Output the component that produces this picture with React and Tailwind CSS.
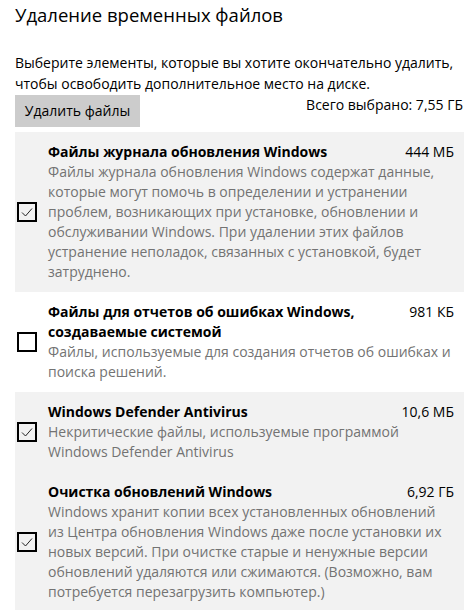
const items = [
  {
    title: ["Файлы журнала обновления Windows"],
    size: "444 МБ",
    checked: true,
    desc: [
      "Файлы журнала обновления Windows содержат данные,",
      "которые могут помочь в определении и устранении",
      "проблем, возникающих при установке, обновлении и",
      "обслуживании Windows. При удалении этих файлов",
      "устранение неполадок, связанных с установкой, будет",
      "затруднено.",
    ],
  },
  {
    title: ["Файлы для отчетов об ошибках Windows,", "создаваемые системой"],
    size: "981 КБ",
    checked: false,
    desc: [
      "Файлы, используемые для создания отчетов об ошибках и",
      "поиска решений.",
    ],
  },
  {
    title: ["Windows Defender Antivirus"],
    size: "10,6 МБ",
    checked: true,
    desc: [
      "Некритические файлы, используемые программой",
      "Windows Defender Antivirus",
    ],
  },
  {
    title: ["Очистка обновлений Windows"],
    size: "6,92 ГБ",
    checked: true,
    desc: [
      "Windows хранит копии всех установленных обновлений",
      "из Центра обновления Windows даже после установки их",
      "новых версий. При очистке старые и ненужные версии",
      "обновлений удаляются или сжимаются. (Возможно, вам",
      "потребуется перезагрузить компьютер.)",
    ],
  },
];

const CheckBox = ({ checked }) => (
  <div className="w-[20px] h-[20px] shrink-0 border-2 border-black flex items-center justify-center">
    {checked && (
      <svg width="14" height="14" viewBox="0 0 14 14">
        <polyline points="2,7.5 5.5,11 12,3.5" fill="none" stroke="#222" strokeWidth="1" />
      </svg>
    )}
  </div>
);

const Item = ({ item }) => (
  <div className={"flex items-center py-[10px] pr-[10px] pl-[2px] " + (item.checked ? "bg-[#f2f2f2]" : "bg-white")}>
    <CheckBox checked={item.checked} />
    <div className="flex-1 ml-[11px]">
      <div className="flex justify-between items-start">
        <div className="font-bold text-black whitespace-nowrap">
          {item.title.map((t, i) => <div key={i}>{t}</div>)}
        </div>
        <div className="text-black whitespace-nowrap">{item.size}</div>
      </div>
      <div className="text-[#737373] whitespace-nowrap">
        {item.desc.map((d, i) => <div key={i}>{d}</div>)}
      </div>
    </div>
  </div>
);

export default function App() {
  return (
    <div className="w-[470px] h-[610px] overflow-hidden bg-white font-['Open_Sans'] text-[14px] leading-[20px] pl-[15px] text-black">
      <h1 className="text-[18.5px] leading-[26px] mt-[2px] font-normal">Удаление временных файлов</h1>
      <p className="mt-[24px] leading-[21px] whitespace-nowrap">
        Выберите элементы, которые вы хотите окончательно удалить,
        <br />
        чтобы освободить дополнительное место на диске.
      </p>
      <div className="flex justify-between items-start mt-[1px] w-[448px]">
        <button className="bg-[#cccccc] w-[125px] h-[32px] text-black">Удалить файлы</button>
        <span>Всего выбрано: 7,55 ГБ</span>
      </div>
      <div className="mt-[5px] w-[449px]">
        {items.map((it, i) => <Item key={i} item={it} />)}
      </div>
    </div>
  );
}
